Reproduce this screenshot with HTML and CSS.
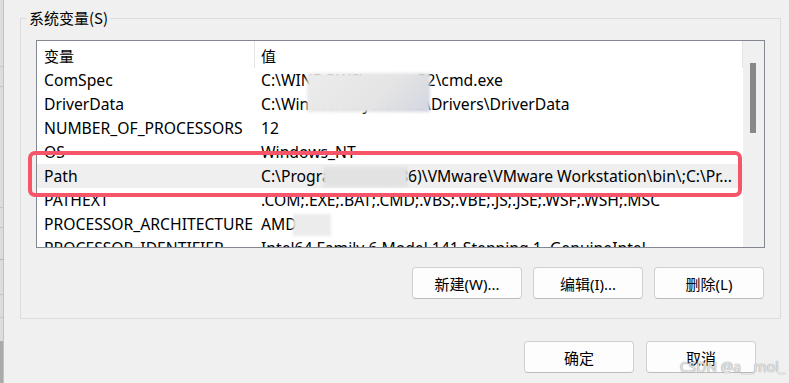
FILE: index.html
```html
<!DOCTYPE html>
<html lang="zh-CN">
  <head>
    <meta charset="UTF-8" />
    <meta name="viewport" content="width=device-width, initial-scale=1.0" />
    <title>系统变量</title>
    <link rel="stylesheet" href="styles.css">
  </head>
  <body>
    <div class="screen">
      <div class="edge"></div>
      <div class="dialog">
        <fieldset class="group">
          <legend>系统变量(S)</legend>
          <div class="listbox">
            <div class="list">
              <div class="head">
                <div class="col name">变量</div>
                <div class="col value">值</div>
              </div>
              <div class="row"><div class="col name">ComSpec</div><div class="col value">C:\WINDOWS\system32\cmd.exe</div></div>
              <div class="row"><div class="col name">DriverData</div><div class="col value">C:\Windows\System32\Drivers\DriverData</div></div>
              <div class="row"><div class="col name">NUMBER_OF_PROCESSORS</div><div class="col value">12</div></div>
              <div class="row"><div class="col name">OS</div><div class="col value">Windows_NT</div></div>
              <div class="row selected"><div class="col name">Path</div><div class="col value">C:\Program Files (x86)\VMware\VMware Workstation\bin\;C:\Pr...</div></div>
              <div class="row"><div class="col name">PATHEXT</div><div class="col value">.COM;.EXE;.BAT;.CMD;.VBS;.VBE;.JS;.JSE;.WSF;.WSH;.MSC</div></div>
              <div class="row"><div class="col name">PROCESSOR_ARCHITECTURE</div><div class="col value">AMD64</div></div>
              <div class="row"><div class="col name">PROCESSOR_IDENTIFIER</div><div class="col value">Intel64 Family 6 Model 141 Stepping 1, GenuineIntel</div></div>
            </div>
            <div class="scrollbar"><div class="thumb"></div></div>

            <!-- 打码区域 -->
            <div class="mask mask-system"></div>
            <div class="mask mask-path"></div>
            <div class="mask mask-arch"></div>

            <div class="mark"></div>
          </div>

          <div class="actions group-actions">
            <button class="btn">新建(W)...</button>
            <button class="btn">编辑(I)...</button>
            <button class="btn">删除(L)</button>
          </div>
        </fieldset>

        <div class="actions dialog-actions">
          <button class="btn">确定</button>
          <button class="btn">取消</button>
        </div>

        <span class="watermark">CSDN @a__mol_</span>
      </div>
    </div>
  </body>
</html>
```

FILE: styles.css
```css
body {
  margin: 0;
  background-color: #f0f0f0;
  font-family: "Noto Sans", "Noto Sans CJK SC", sans-serif;
  font-size: 15px;
  color: #000;
}
.screen {
  display: flex;
  height: 383px;
  overflow: hidden;
}
.edge {
  width: 3px;
  border-right: 1px solid #c2c2c2;
  background: linear-gradient(
    to bottom,
    #dcdcdc 0 66px,
    #c6c6c6 66px 67px,
    #dcdcdc 67px 86px,
    #c6c6c6 86px 87px,
    #dcdcdc 87px 207px,
    #c6c6c6 207px 208px,
    #dcdcdc 208px 227px,
    #c6c6c6 227px 228px,
    #dcdcdc 228px 259px,
    #b8b8b8 259px 260px,
    #dcdcdc 260px 294px,
    #c6c6c6 294px 295px,
    #dcdcdc 295px 317px,
    #c6c6c6 317px 318px,
    #dcdcdc 318px 341px,
    #aaaaaa 341px
  );
}
.dialog {
  position: relative;
  flex: 1;
  padding: 0 8px 0 16px;
}
.group {
  margin: 8px 0 0 0;
  padding: 12px 15px 19px 15px;
  border: 1px solid #dcdcdc;
  min-width: 0;
}
.group legend {
  margin-left: -9px;
  padding: 0 2px;
  line-height: 20px;
  font-family: "Noto Sans CJK SC", sans-serif;
}
.listbox {
  position: relative;
  display: flex;
  height: 208px;
  box-sizing: border-box;
  border: 1px solid #828790;
  background-color: #fff;
}
.list {
  flex: 1;
  overflow: hidden;
}
.head,
.row {
  display: flex;
  white-space: nowrap;
}
.head {
  height: 27px;
  line-height: 29px;
  font-family: "Noto Sans CJK SC", sans-serif;
}
.head .name {
  border-right: 1px solid #e5e5e5;
}
.head .value {
  flex: 1;
  border-right: 1px solid #e5e5e5;
}
.row {
  height: 24px;
  line-height: 24px;
  font-size: 15.7px;
}
.row.selected {
  background-color: #efefef;
}
.col.name {
  box-sizing: border-box;
  width: 218px;
  padding-left: 7px;
}
.col.value {
  padding-left: 6px;
}
.scrollbar {
  width: 21px;
  background-color: #f0f0f0;
}
.thumb {
  width: 6px;
  height: 70px;
  margin: 22px 0 0 7px;
  background-color: #888;
}
.mask {
  position: absolute;
  background: linear-gradient(135deg, #ececec 0%, #e4e4e4 60%, #d2d6e2 100%);
  filter: blur(1.5px);
}
.mask-system {
  left: 270px;
  top: 32px;
  width: 123px;
  height: 39px;
}
.mask-path {
  left: 286px;
  top: 126px;
  width: 85px;
  height: 20px;
  background: #e2e2e2;
}
.mask-arch {
  left: 256px;
  top: 173px;
  width: 38px;
  height: 22px;
  background: #ececec;
}
.mark {
  position: absolute;
  left: -9px;
  top: 110px;
  width: 714px;
  height: 46px;
  box-sizing: border-box;
  border: 4px solid #f55469;
  border-radius: 7px;
}
.actions {
  display: flex;
  justify-content: flex-end;
}
.group-actions {
  margin-top: 19px;
  padding-right: 1px;
  gap: 11px;
}
.dialog-actions {
  margin-top: 22px;
  padding-right: 25px;
  gap: 12px;
}
.btn {
  width: 110px;
  height: 32px;
  padding: 0;
  border: 1px solid #d0d0d0;
  border-bottom-color: #bdbdbd;
  border-radius: 4px;
  background-color: #fdfdfd;
  font-family: "Noto Sans", "Noto Sans CJK SC", sans-serif;
  font-size: 15px;
  color: #000;
}
.watermark {
  position: absolute;
  right: 4px;
  top: 357px;
  font-family: "Noto Sans", sans-serif;
  font-size: 14px;
  color: rgba(255, 255, 255, 0.75);
  text-shadow: 0 0 1px #9a9a9a, 0 0 1px #9a9a9a;
}
```
